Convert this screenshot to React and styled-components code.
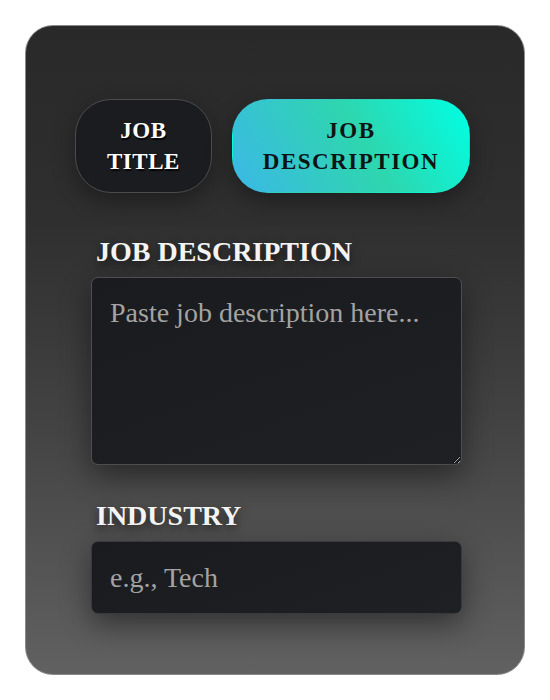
import React, { useState } from 'react';
import styled, { createGlobalStyle } from 'styled-components';

const GlobalStyle = createGlobalStyle`
  * { box-sizing: border-box; }
  body {
    margin: 0;
    background: #ffffff;
    font-family: "Liberation Serif", "DejaVu Serif", serif;
  }
`;

const Page = styled.div`
  padding: 25px;
`;

const Card = styled.div`
  width: 500px;
  height: 650px;
  border: 1px solid #8a8a8a;
  border-radius: 28px;
  padding: 73px 49px 0;
  background: linear-gradient(180deg, #292929 0%, #2f2f2f 30%, #424242 60%, #616161 100%);
`;

const Tabs = styled.div`
  display: flex;
  gap: 20px;
`;

const Tab = styled.button`
  height: 94px;
  padding: 0 ${p => (p.$active ? '30px' : '31px')};
  border-radius: 36px;
  font-family: "Liberation Serif", serif;
  font-size: 23px;
  font-weight: 700;
  line-height: 31px;
  text-transform: uppercase;
  cursor: pointer;
  letter-spacing: ${p => (p.$active ? '1.5px' : '0.5px')};
  color: ${p => (p.$active ? '#0e1414' : '#ffffff')};
  text-shadow: ${p => (p.$active ? 'none' : '1px 2px 1px rgba(0,0,0,0.8)')};
  border: 1px solid ${p => (p.$active ? 'transparent' : '#4c4c4c')};
  background: ${p =>
    p.$active
      ? 'linear-gradient(60deg, #3bb8e6 0%, #2ed6ae 55%, #00ffe4 100%)'
      : '#1b1c1f'};
  box-shadow: 0 8px 22px rgba(0, 0, 0, 0.35);
`;

const Form = styled.div`
  display: flex;
  flex-direction: column;
  padding: 43px 13px 0 16px;
`;

const Label = styled.label`
  display: block;
  padding-left: 5px;
  margin-bottom: 9px;
  font-size: 28px;
  font-weight: 700;
  line-height: 32px;
  text-transform: uppercase;
  color: #f4f4f4;
  text-shadow: 0 4px 10px rgba(0, 0, 0, 0.6);
`;

const fieldStyle = `
  width: 100%;
  border: 1px solid #4e4e50;
  border-radius: 7px;
  background: linear-gradient(160deg, #1a1b1e 0%, #1d1e21 60%, #1f2023 100%);
  color: #e8e8e8;
  font-family: "Liberation Serif", serif;
  font-size: 28px;
  line-height: 32px;
  padding: 19px 18px;
  outline: none;
  box-shadow: 0 10px 30px rgba(0, 0, 0, 0.45);
  &::placeholder { color: #a3a3a3; }
`;

const TextArea = styled.textarea`
  ${fieldStyle}
  height: 188px;
  resize: vertical;
`;

const Input = styled.input`
  ${fieldStyle}
  height: 73px;
  border-color: #3a3a3c;
`;

const Gap = styled.div`
  height: 35px;
`;

export default function App() {
  const [tab, setTab] = useState('description');
  return (
    <Page>
      <GlobalStyle />
      <Card>
        <Tabs>
          <Tab $active={tab === 'title'} onClick={() => setTab('title')}>
            Job<br />Title
          </Tab>
          <Tab $active={tab === 'description'} onClick={() => setTab('description')}>
            Job<br />Description
          </Tab>
        </Tabs>
        <Form>
          <Label htmlFor="jd">Job Description</Label>
          <TextArea id="jd" placeholder="Paste job description here..." />
          <Gap />
          <Label htmlFor="ind">Industry</Label>
          <Input id="ind" placeholder="e.g., Tech" />
        </Form>
      </Card>
    </Page>
  );
}
